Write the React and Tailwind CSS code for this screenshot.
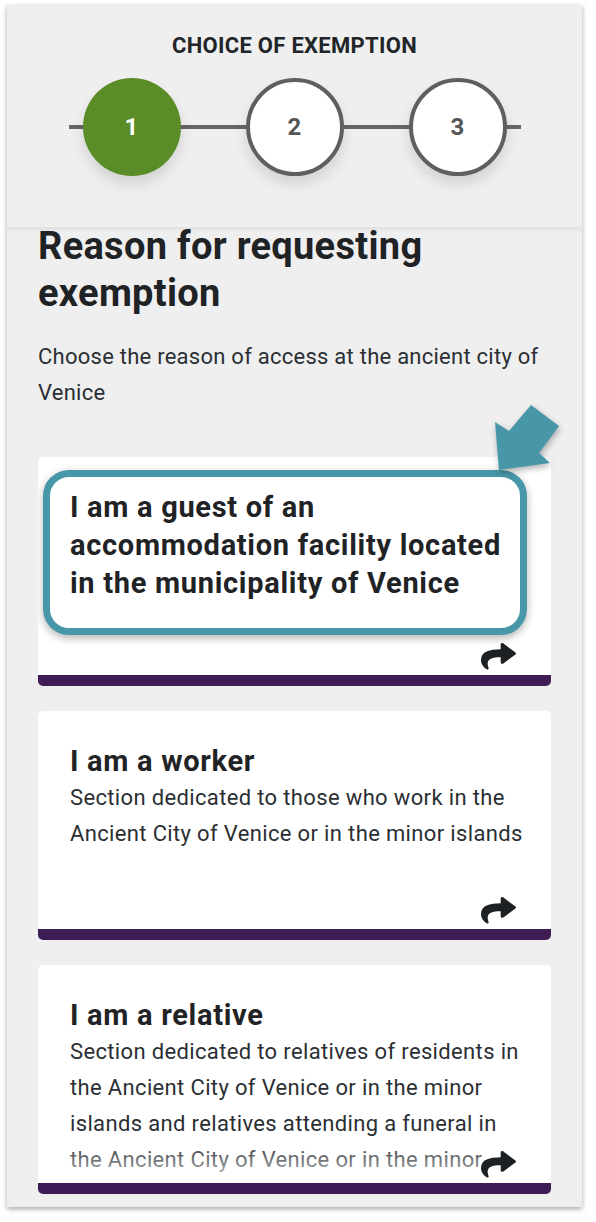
import React from "react";

const SHARE_PATH =
  "M503.691 189.836L327.687 37.851C312.281 24.546 288 35.347 288 56.015v80.053C127.371 137.907 0 170.1 0 322.326c0 61.441 39.581 122.309 83.333 154.132 13.653 9.931 33.111-2.533 28.077-18.631C66.066 312.814 132.917 274.316 288 272.085V360c0 20.7 24.3 31.453 39.687 18.164l176.004-152c11.071-9.562 11.086-26.753 0-36.328z";

function ShareIcon() {
  return (
    <svg
      width="35"
      height="27"
      viewBox="0 30 512 458"
      preserveAspectRatio="none"
      className="absolute right-[35px] bottom-[5px]"
    >
      <path d={SHARE_PATH} fill="#1e2124" />
    </svg>
  );
}

function Card({ title, lines, fade, children }) {
  return (
    <div className="relative flex h-[229px] w-[513px] flex-col overflow-hidden rounded-[5px] bg-white">
      <div className="relative flex-1 overflow-hidden pl-[32px] pt-[31px]">
        <div className="whitespace-nowrap text-[29px] font-bold leading-[38px] tracking-[0.7px] text-[#1f2326]">
          {title.map((t, i) => (
            <div key={i}>{t}</div>
          ))}
        </div>
        {lines && (
          <div className="whitespace-nowrap text-[22px] leading-[36px] tracking-[0.35px] text-[#2b2f33]">
            {lines.map((t, i) => (
              <div key={i}>{t}</div>
            ))}
          </div>
        )}
        {fade && (
          <div className="absolute bottom-0 left-0 right-0 h-[42px] bg-gradient-to-b from-white/0 to-white/75" />
        )}
        <ShareIcon />
      </div>
      <div className="h-[11px] bg-[#3e1d56]" />
      {children}
    </div>
  );
}

function Step({ n, active }) {
  return (
    <div
      className={
        active
          ? "relative z-10 flex h-[98px] w-[98px] items-center justify-center rounded-full bg-[#5a8c28] text-[24px] font-bold text-white shadow-[0_8px_14px_rgba(0,0,0,0.12)]"
          : "relative z-10 flex h-[98px] w-[98px] items-center justify-center rounded-full border-[4px] border-[#5f5f5f] bg-white text-[24px] font-bold text-[#555555] shadow-[0_8px_14px_rgba(0,0,0,0.12)]"
      }
    >
      {n}
    </div>
  );
}

export default function App() {
  return (
    <div
      className="relative min-h-[1222px] w-[596px] bg-white pl-[7px] pt-[5px]"
      style={{ fontFamily: "Roboto, 'Liberation Sans', sans-serif" }}
    >
      <div className="relative h-[1202px] w-[575px] overflow-hidden bg-[#efefef] shadow-[0_2px_5px_rgba(0,0,0,0.35)]">
        <div className="flex h-[223px] flex-col items-center border-b border-[#e2e2e2] pt-[28px] shadow-[0_2px_3px_rgba(0,0,0,0.06)]">
          <div className="text-[22px] font-bold uppercase leading-[26px] tracking-[0.3px] text-[#222529]">
            Choice of exemption
          </div>
          <div className="relative mt-[19px] flex w-[452px] items-center justify-between px-[14px]">
            <div className="absolute left-0 right-0 top-1/2 h-[4px] -translate-y-1/2 bg-[#666666]" />
            <Step n="1" active />
            <Step n="2" />
            <Step n="3" />
          </div>
        </div>

        <div className="px-[31px]">
          <h1 className="-mt-[5px] text-[38px] font-bold leading-[47px] tracking-[0.3px] text-[#1f2326]">
            Reason for requesting
            <br />
            exemption
          </h1>
          <p className="mt-[22px] text-[22px] leading-[36px] tracking-[0.25px] text-[#2b2f33]">
            Choose the reason of access at the ancient city of
            <br />
            Venice
          </p>

          <div className="mt-[46px] flex flex-col gap-[25px]">
            <Card
              title={[
                "I am a guest of an",
                "accommodation facility located",
                "in the municipality of Venice",
              ]}
            >
              <div className="absolute left-[5px] top-[13px] h-[165px] w-[484px] rounded-[26px] border-[7px] border-[#4797a8] shadow-[0_3px_8px_rgba(0,0,0,0.3)]" />
            </Card>
            <Card
              title={["I am a worker"]}
              lines={[
                "Section dedicated to those who work in the",
                "Ancient City of Venice or in the minor islands",
              ]}
            />
            <Card
              title={["I am a relative"]}
              lines={[
                "Section dedicated to relatives of residents in",
                "the Ancient City of Venice or in the minor",
                "islands and relatives attending a funeral in",
                "the Ancient City of Venice or in the minor",
              ]}
              fade
            />
          </div>
        </div>
      </div>

      <svg
        className="absolute left-[490px] top-[400px]"
        width="75"
        height="75"
        viewBox="0 0 75 75"
        style={{ filter: "drop-shadow(1px 3px 3px rgba(0,0,0,0.3))" }}
      >
        <polygon
          points="41,5 69,26 49,53 60,63 9,70 5,22 19,31"
          fill="#4797a8"
        />
      </svg>
    </div>
  );
}
